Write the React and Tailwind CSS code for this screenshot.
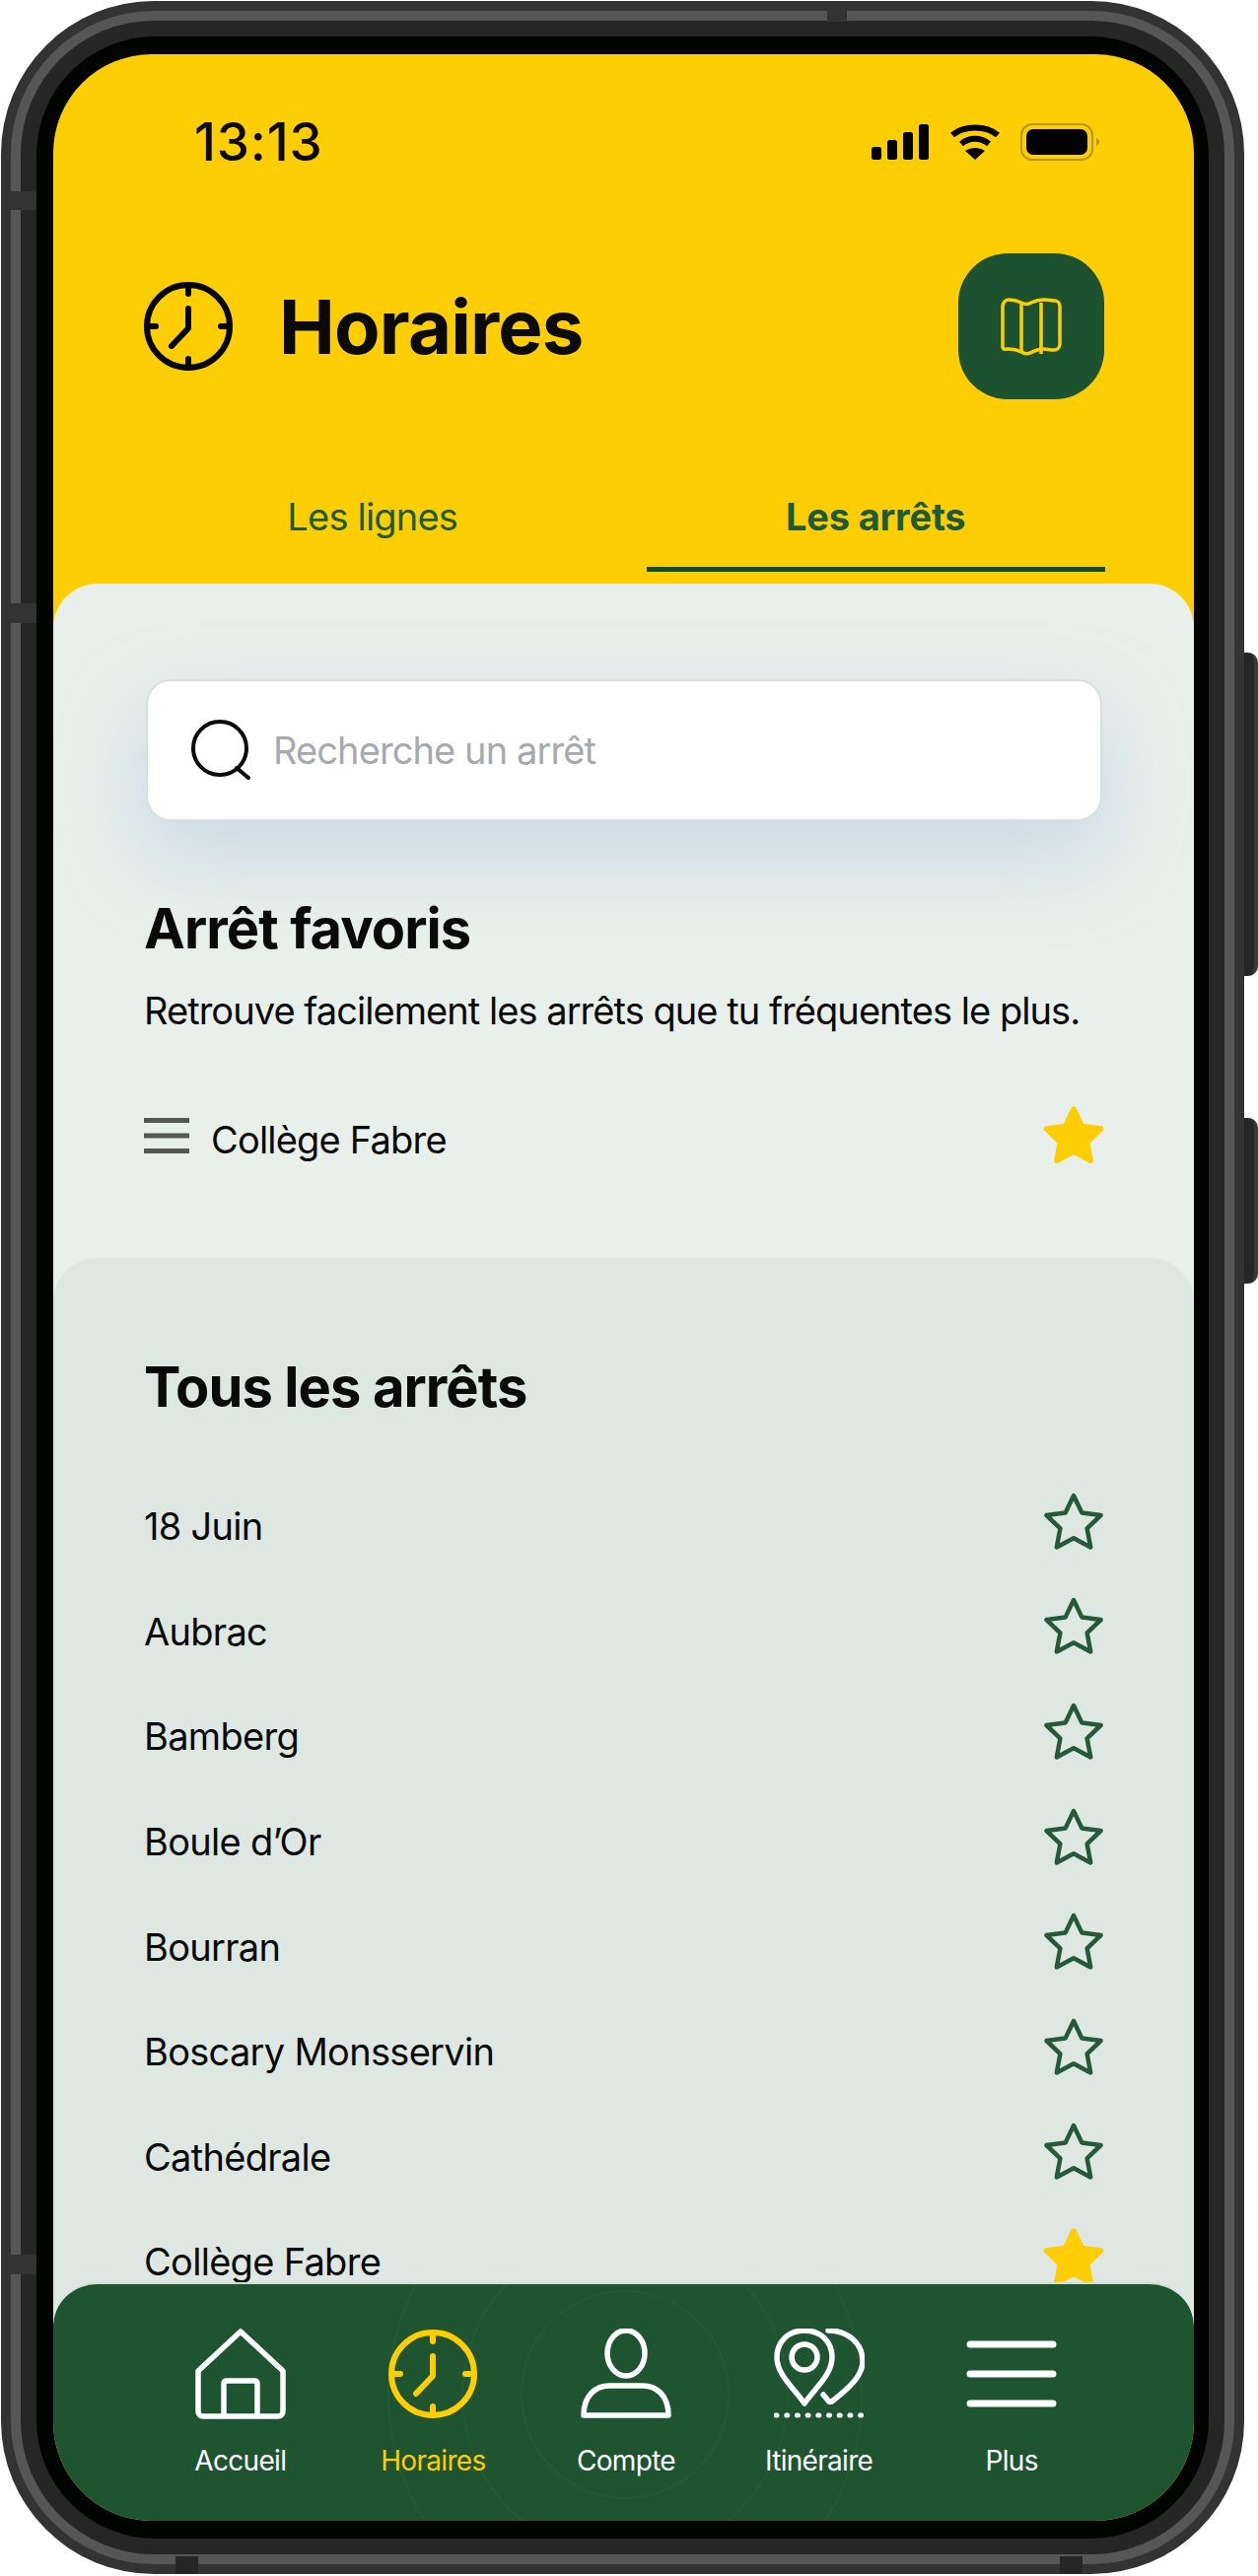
import React from "react";

const stops = ["18 Juin", "Aubrac", "Bamberg", "Boule d’Or", "Bourran", "Boscary Monsservin", "Cathédrale", "Collège Fabre"];

const starPoints = "31,4 39.4,21.6 58.6,24 44.6,37.4 48.2,56.4 31,47.2 13.8,56.4 17.4,37.4 3.4,24 22.6,21.6";

function Star({ filled }) {
  return (
    <svg width="62" height="60" viewBox="0 0 62 60" className="shrink-0 -mt-[11px] -mr-[1px]">
      <polygon
        points={starPoints}
        fill={filled ? "#fece04" : "none"}
        stroke={filled ? "#fece04" : "#24593c"}
        strokeWidth={filled ? 5.5 : 4.5}
        strokeLinejoin="round"
      />
    </svg>
  );
}

function Clock({ color, width = 6 }) {
  return (
    <svg width="90" height="90" viewBox="0 0 90 90" fill="none" stroke={color} strokeWidth={width} strokeLinecap="round" strokeLinejoin="round">
      <circle cx="45" cy="45" r="42" />
      <path d="M45 5v7M45 78v7M5 45h7M78 45h7" />
      <path d="M45 27v20L28 65" />
    </svg>
  );
}

function NavItem({ label, active, children }) {
  return (
    <div className="flex flex-col items-center">
      <div className="h-[90px] flex items-center justify-center">{children}</div>
      <span className={`mt-[24px] text-[28px] leading-[38px] tracking-[-0.7px] ${active ? "text-[#fece04]" : "text-white"}`}>{label}</span>
    </div>
  );
}

export default function App() {
  return (
    <div className="w-[1276px] h-[2613px] bg-white overflow-hidden [font-family:Inter,sans-serif] text-[#0a0a0a] flex items-start">
      {/* phone body */}
      <div className="relative mt-[1px] ml-[1px] w-[1261px] h-[2610px] shrink-0 rounded-[155px] bg-[#333333] p-[10px]">
        <div className="h-full rounded-[145px] bg-[#565656] p-[10px]">
          <div className="h-full rounded-[135px] bg-[#262626] p-[16px]">
            <div className="h-full rounded-[120px] bg-[#020402] pt-[18px] pr-[15px] pb-[18px] pl-[17px]">
              <div className="relative h-full rounded-[100px] overflow-hidden bg-[#fece04]">
                {/* status bar */}
                <div className="mt-[59px] h-[60px] flex items-center justify-between pl-[143px] pr-[94px]">
                  <span className="text-[53px] leading-[60px] font-medium tracking-[0.8px]">13:13</span>
                  <div className="flex items-center">
                    <svg width="58" height="36" viewBox="0 0 58 36" fill="#000">
                      <rect x="0" y="23" width="10" height="13" rx="2.5" />
                      <rect x="16" y="16" width="10" height="20" rx="2.5" />
                      <rect x="32" y="8" width="10" height="28" rx="2.5" />
                      <rect x="48" y="0" width="10" height="36" rx="2.5" />
                    </svg>
                    <svg width="52" height="36" viewBox="0 0 52 36" fill="none" stroke="#000" strokeWidth="6" className="ml-[21px]">
                      <path d="M3 11C15 1 37 1 49 11" />
                      <path d="M12 20C20 13 32 13 40 20" />
                      <path d="M26 36L16 27C22 23 30 23 36 27Z" fill="#000" stroke="none" />
                    </svg>
                    <svg width="82" height="38" viewBox="0 0 82 38" fill="none" className="ml-[20px]">
                      <rect x="1" y="1" width="72" height="36" rx="11" stroke="#b8950a" strokeWidth="2" />
                      <rect x="6" y="6" width="62" height="26" rx="7" fill="#000" />
                      <path d="M77 15c2 1 3 2.500 3 4s-1 3-3 4z" fill="#b8950a" />
                    </svg>
                  </div>
                </div>

                {/* title */}
                <div className="mt-[83px] h-[148px] flex items-center justify-between ml-[92px] mr-[91px]">
                  <div className="flex items-center">
                    <Clock color="#000" />
                    <h1 className="ml-[47px] text-[76px] leading-[90px] font-bold tracking-[-0.8px]">Horaires</h1>
                  </div>
                  <div className="w-[148px] h-[148px] rounded-[50px] bg-[#1c5230] flex items-center justify-center">
                    <svg width="62" height="60" viewBox="0 0 62 60" fill="none" stroke="#fece04" strokeWidth="3.500" strokeLinejoin="round">
                      <path d="M2 10c0-4 3-7 6-7 5 0 9 1 13 3 4 2 7 2 10 0 4-2 8-3 13-3 5 0 9 1 11 1 3 0 5 3 5 6v38c0 4-3 6-6 6-4 0-8-1-11-1-5 0-9 2-13 4-3 1-6 1-9-1-4-2-8-3-13-3-3 0-6 1-6-2z" />
                      <path d="M21 6v50M41 6v52" />
                    </svg>
                  </div>
                </div>

                {/* tabs */}
                <div className="mt-[94px] ml-[91px] w-[976px] grid grid-cols-2 gap-x-[45px]">
                  <div className="text-center">
                    <div className="h-[50px] leading-[50px] text-[38px] text-[#1c5a38] tracking-[-0.8px]">Les lignes</div>
                  </div>
                  <div className="text-center">
                    <div className="h-[50px] leading-[50px] text-[38px] font-bold text-[#1c5a38] tracking-[-0.2px]">Les arrêts</div>
                    <div className="mt-[26px] h-[5px] bg-[#0f4a33]" />
                  </div>
                </div>

                {/* favourites panel */}
                <div className="mt-[12px] rounded-t-[45px] bg-[#e9efeb]">
                  <div className="pt-[97px] pl-[92px] pr-[92px]">
                    <div className="ml-[2px] w-[970px] h-[144px] rounded-[25px] bg-white border-2 border-[#d7e0dc] shadow-[0_36px_80px_rgba(175,200,230,0.55)] flex items-center pl-[43px]">
                      <svg width="62" height="62" viewBox="0 0 62 62" fill="none" stroke="#0a0a0a" strokeWidth="4" strokeLinecap="round">
                        <circle cx="30" cy="29" r="27" />
                        <path d="M47 49l12 10" />
                      </svg>
                      <span className="ml-[22px] text-[38px] leading-[50px] text-[#a6a9ae] tracking-[-0.9px]">Recherche un arrêt</span>
                    </div>
                    <h2 className="relative mt-[79px] h-[60px] leading-[60px] text-[56px] font-bold tracking-[-0.9px]">Arrêt favoris</h2>
                    <p className="relative mt-[30px] h-[46px] leading-[46px] text-[38px] tracking-[-0.95px]">Retrouve facilement les arrêts que tu fréquentes le plus.</p>
                    <div className="mt-[77px] h-[62px] flex items-center justify-between">
                      <div className="flex items-center">
                        <svg width="46" height="36" viewBox="0 0 46 36" stroke="#565656" strokeWidth="5" className="-mt-[8px]">
                          <path d="M0 2.500h46M0 18h46M0 33.500h46" />
                        </svg>
                        <span className="ml-[22px] text-[38px] leading-[50px] tracking-[-0.8px]">Collège Fabre</span>
                      </div>
                      <Star filled />
                    </div>
                  </div>

                  {/* all stops panel */}
                  <div className="mt-[89px] rounded-t-[45px] bg-[#dee7e2] pt-[101px] pl-[92px] pr-[92px] pb-[60px]">
                    <h2 className="h-[60px] leading-[60px] text-[56px] font-bold tracking-[-0.9px]">Tous les arrêts</h2>
                    <div className="mt-[58px]">
                      {stops.map((s, i) => (
                        <div key={s} className="h-[106.6px] flex items-center justify-between">
                          <span className="text-[38px] leading-[50px] tracking-[-0.7px]">{s}</span>
                          <Star filled={i === stops.length - 1} />
                        </div>
                      ))}
                    </div>
                  </div>
                </div>

                {/* bottom nav */}
                <div className="absolute left-0 right-0 bottom-0 h-[242px] rounded-t-[45px] bg-[#1e5430] border-t-2 border-white/80 overflow-hidden">
                  <svg className="absolute left-0 top-0" width="1157" height="242" fill="none" stroke="#ffffff" strokeOpacity="0.03" strokeWidth="2">
                    <circle cx="580" cy="112" r="105" />
                    <circle cx="580" cy="112" r="165" />
                    <circle cx="580" cy="112" r="240" />
                  </svg>
                  <div className="relative mt-[46px] ml-[92px] w-[978px] grid grid-cols-5">
                    <NavItem label="Accueil">
                      <svg width="92" height="92" viewBox="0 0 92 92" fill="none" stroke="#fff" strokeWidth="5.500" strokeLinejoin="round" strokeLinecap="round">
                        <path d="M46 3L89 43V84c0 3-2 5-5 5H8c-3 0-5-2-5-5V43z" />
                        <path d="M29 88V56c0-2 1-3 3-3h28c2 0 3 1 3 3v32" />
                      </svg>
                    </NavItem>
                    <NavItem label="Horaires" active>
                      <Clock color="#fece04" />
                    </NavItem>
                    <NavItem label="Compte">
                      <svg width="92" height="92" viewBox="0 0 92 92" fill="none" stroke="#fff" strokeWidth="5.500" strokeLinejoin="round">
                        <ellipse cx="46" cy="25" rx="19" ry="23" />
                        <path d="M3 88c0-20 12-30 26-30h34c14 0 26 10 26 30z" />
                      </svg>
                    </NavItem>
                    <NavItem label="Itinéraire">
                      <svg width="92" height="92" viewBox="0 0 92 92" fill="none" stroke="#fff" strokeWidth="5.500" strokeLinejoin="round" strokeLinecap="round">
                        <path d="M31 76C20 60 3 47 3 29 3 13 15 2 31 2s28 11 28 27c0 18-17 31-28 47z" />
                        <circle cx="31" cy="29" r="13" />
                        <path d="M55 2c20 0 35 13 35 31 0 14-12 26-30 40-2 2-4 2-5 0l-5-6" />
                        <path d="M2 88h88" strokeWidth="5" strokeDasharray="1 9.700" />
                      </svg>
                    </NavItem>
                    <NavItem label="Plus">
                      <svg width="92" height="70" viewBox="0 0 92 70" fill="none" stroke="#fff" strokeWidth="7" strokeLinecap="round">
                        <path d="M4 5h84M4 35h84M4 65h84" />
                      </svg>
                    </NavItem>
                  </div>
                </div>
              </div>
            </div>
          </div>
        </div>

        {/* antenna bands on the frame */}
        <div className="absolute left-[9px] top-[193px] w-[27px] h-[19px] bg-[#333333]" />
        <div className="absolute left-[9px] top-[611px] w-[27px] h-[20px] bg-[#333333]" />
        <div className="absolute left-[9px] top-[2286px] w-[27px] h-[20px] bg-[#333333]" />
        <div className="absolute left-[838px] top-0 w-[20px] h-[21px] bg-[#333333]" />
        <div className="absolute left-[177px] bottom-0 w-[23px] h-[18px] bg-[#262626]" />
        <div className="absolute left-[1074px] bottom-0 w-[23px] h-[18px] bg-[#262626]" />
      </div>

      {/* side buttons */}
      <div className="shrink-0 pt-[662px]">
        <div className="w-[14px] h-[328px] rounded-r-[10px] bg-[#262626] border-r-4 border-[#3a3a3a]" />
        <div className="mt-[144px] w-[14px] h-[168px] rounded-r-[10px] bg-[#262626] border-r-4 border-[#3a3a3a]" />
      </div>
    </div>
  );
}
